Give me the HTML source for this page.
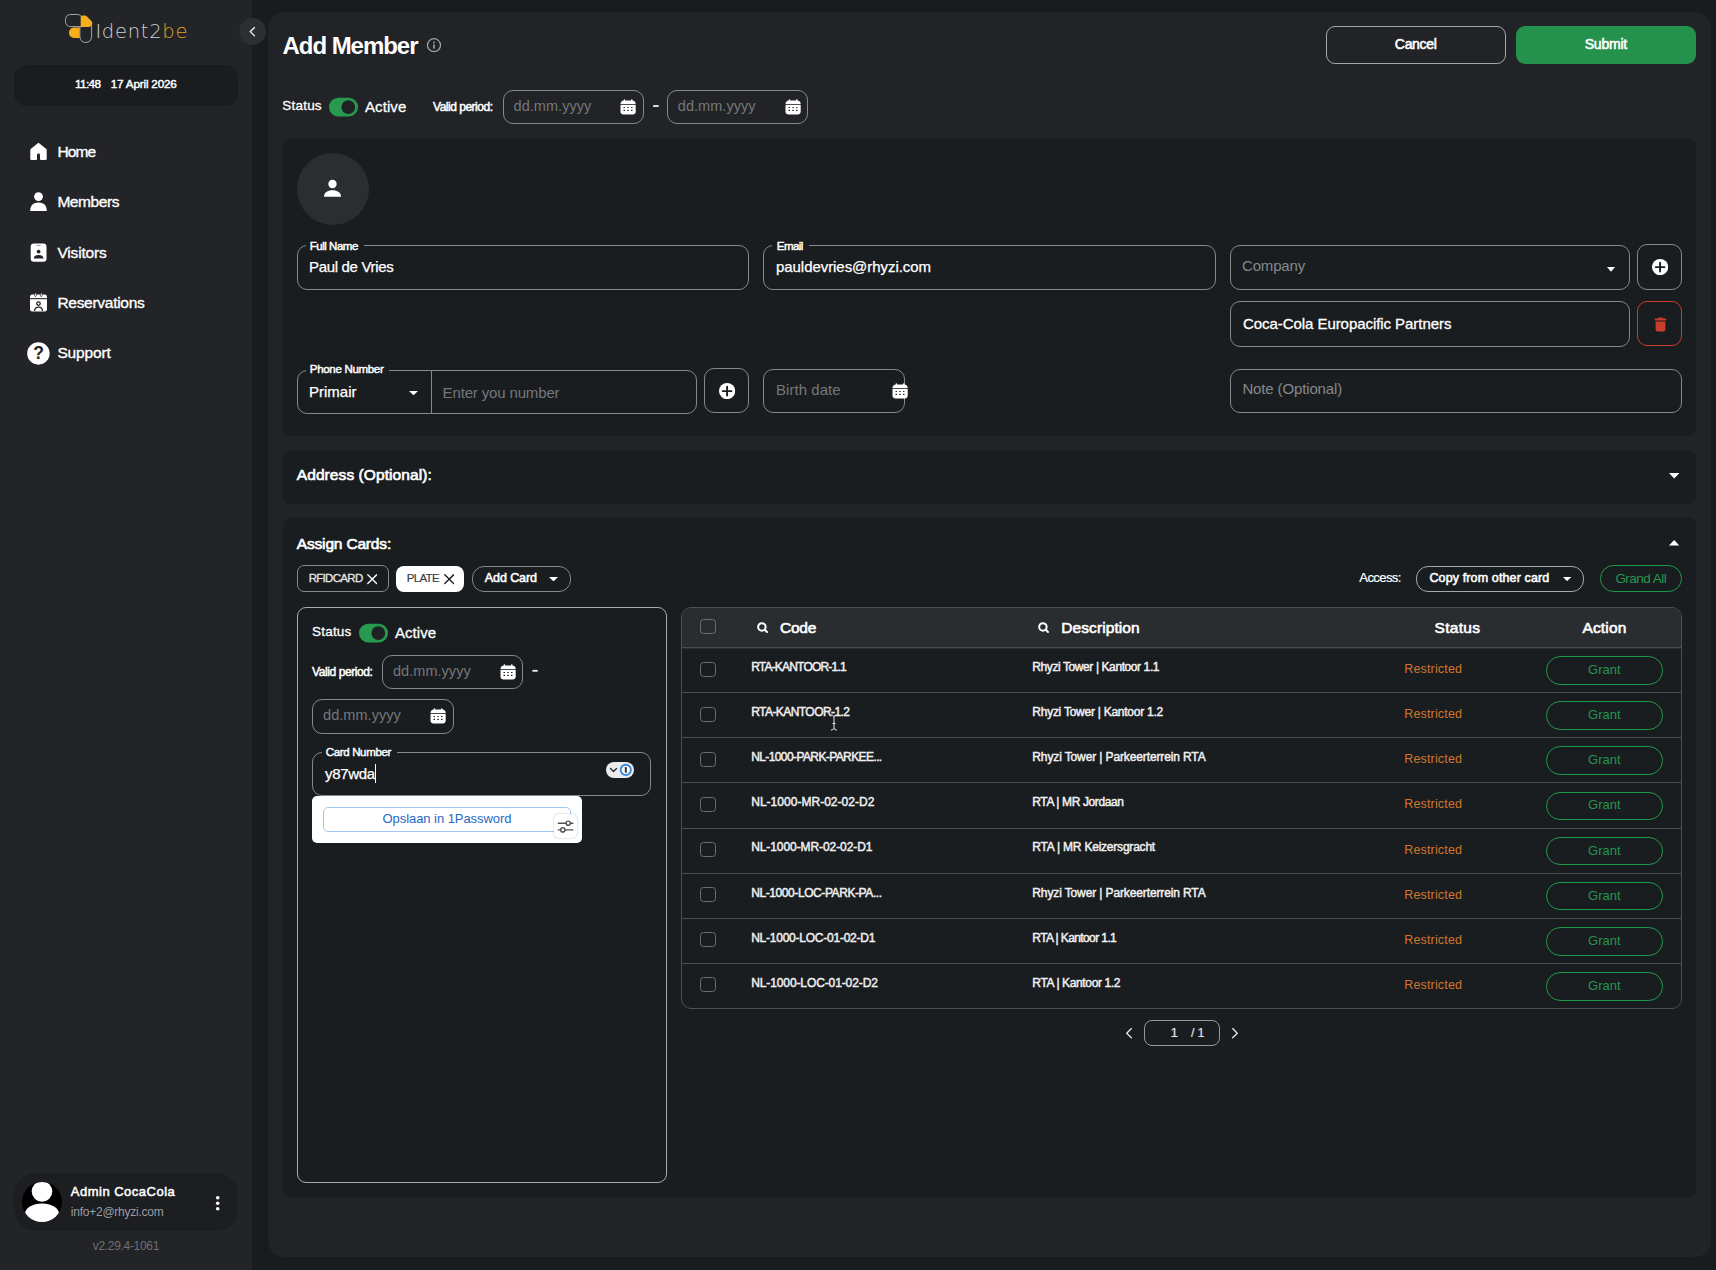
<!DOCTYPE html>
<html lang="en">
<head>
<meta charset="utf-8">
<title>Add Member</title>
<style>
*{box-sizing:border-box;margin:0;padding:0}
html,body{width:1716px;height:1270px;overflow:hidden;background:#191c1f;}
body{position:relative;font-family:"Liberation Sans",sans-serif;color:#fff;font-size:14px;}
.abs{position:absolute}
.t{position:absolute;white-space:nowrap;line-height:1;}
.f{position:absolute;border:1px solid #85888c;border-radius:10px;}
.cb{position:absolute;width:16px;height:15px;border:1px solid #696d78;border-radius:3.5px;}
.hl{position:absolute;height:1px;background:#4a4d51;}
</style>
</head>
<body>
<!-- SIDEBAR -->
<div class="abs" style="left:0.00px;top:0.00px;width:252.00px;height:1270.00px;background:#232428;"></div>
<svg class="abs" style="left:63.00px;top:12.00px;" width="32" height="34" viewBox="0 0 32 34">
      <path d="M19.2 14.6 L7.4 14.6 C4.6 14.6 2.5 12.5 2.5 9.6 L2.5 7.4 C2.5 4.6 4.6 2.5 7.4 2.5 L14.4 2.5 C17.2 2.5 19.2 4.6 19.2 7.4 Z" fill="none" stroke="#a4a6a9" stroke-width="1"/>
      <path d="M16.9 14.6 L16.9 24.8 C16.9 28.2 19.4 30.5 22.7 30.5 C26 30.5 28.6 28.2 28.6 24.8 L28.6 11" fill="none" stroke="#a4a6a9" stroke-width="1"/>
      <path d="M17.7 5.2 C17.7 4.1 18.5 3.4 19.6 3.4 L21.9 3.4 C22.6 3.4 23.2 3.7 23.7 4.2 L28.4 9 C29 9.6 29.2 10.3 29.2 11 L29.2 11.4 C29.2 13.4 27.6 15 25.6 15 L17.7 15 Z" fill="#f6ae1d"/>
      <path d="M16.6 15.4 L16.6 25.9 L11.2 25.9 C8.2 25.9 6 23.7 6 20.7 C6 17.6 8.2 15.4 11.2 15.4 Z" fill="#f6ae1d"/>
    </svg>
<div class="t" style="top:22.29px;font-size:19.5px;color:#cfd0d2;left:95.40px;font-family:'DejaVu Sans',sans-serif;font-weight:200;letter-spacing:0.725px;"><span>Ident2<span style="color:#e0a024">be</span></span></div>
<svg class="abs" style="left:238.00px;top:16.00px;z-index:5" width="30" height="30" viewBox="0 0 30 30"><circle cx="14.6" cy="15.4" r="13.4" fill="#2c2f32"/></svg>
<svg class="abs" style="left:238.00px;top:16.00px;z-index:6" width="30" height="30" viewBox="0 0 30 30"><path d="M16.4 11.6 L12.2 15.6 L16.4 19.7" fill="none" stroke="#dcddde" stroke-width="1.45" stroke-linecap="round" stroke-linejoin="round"/></svg>
<div class="abs" style="left:14.00px;top:65.00px;width:224.00px;height:41.00px;border-radius:13px;background:#1a1c1f;"></div>
<div class="t" style="top:77.80px;font-size:11.7px;-webkit-text-stroke:0.45px #fff;left:75.00px;letter-spacing:-0.598px;"><span>11:48</span></div>
<div class="t" style="top:77.80px;font-size:11.7px;-webkit-text-stroke:0.45px #fff;left:110.80px;letter-spacing:-0.186px;"><span>17 April 2026</span></div>
<div class="t" style="top:144.28px;font-size:15.5px;-webkit-text-stroke:0.35px #fff;left:57.40px;letter-spacing:-0.853px;"><span>Home</span></div>
<div class="t" style="top:193.88px;font-size:15.5px;-webkit-text-stroke:0.35px #fff;left:57.40px;letter-spacing:-0.435px;"><span>Members</span></div>
<div class="t" style="top:245.08px;font-size:15.5px;-webkit-text-stroke:0.35px #fff;left:57.40px;letter-spacing:-0.164px;"><span>Visitors</span></div>
<div class="t" style="top:294.88px;font-size:15.5px;-webkit-text-stroke:0.35px #fff;left:57.40px;letter-spacing:-0.279px;"><span>Reservations</span></div>
<div class="t" style="top:344.68px;font-size:15.5px;-webkit-text-stroke:0.35px #fff;left:57.40px;letter-spacing:-0.133px;"><span>Support</span></div>
<svg class="abs" style="left:29.00px;top:142.00px;" width="19" height="19" viewBox="0 0 19 19"><path d="M9.5 2.1 L16.6 7.9 L16.6 16.9 L12.1 16.9 L12.1 12.9 C12.1 11.4 11 10.4 9.5 10.4 C8 10.4 6.9 11.4 6.9 12.9 L6.9 16.9 L2.4 16.9 L2.4 7.9 Z" fill="#fff" stroke="#fff" stroke-width="2.2" stroke-linejoin="round"/></svg>
<svg class="abs" style="left:29.00px;top:191.00px;" width="19" height="21" viewBox="0 0 19 21"><circle cx="9.5" cy="5.6" r="4.4" fill="#fff"/><path d="M1.2 20 C1.2 14.4 4.4 11.6 9.5 11.6 C14.6 11.6 17.8 14.4 17.8 20 Z" fill="#fff"/></svg>
<svg class="abs" style="left:29.00px;top:242.00px;" width="19" height="21" viewBox="0 0 19 21"><rect x="1.7" y="1.5" width="15.8" height="18.2" rx="3.2" fill="#fff"/><rect x="7.4" y="3" width="4.4" height="0.9" rx="0.45" fill="#9a9c9f"/><circle cx="9.6" cy="9.6" r="1.9" fill="#232428"/><path d="M4.7 16.6 C4.7 14.2 6.9 13.1 9.6 13.1 C12.3 13.1 14.5 14.2 14.5 16.6 Z" fill="#232428"/></svg>
<svg class="abs" style="left:29.00px;top:292.00px;" width="19" height="21" viewBox="0 0 19 21"><rect x="1" y="2.6" width="17" height="17" rx="2.4" fill="#fff"/><rect x="1" y="6.1" width="17" height="1.1" fill="#232428"/><rect x="5.6" y="0.9" width="1.7" height="3.6" rx="0.85" fill="#fff" stroke="#232428" stroke-width="0.7"/><rect x="11.4" y="0.9" width="1.7" height="3.6" rx="0.85" fill="#fff" stroke="#232428" stroke-width="0.7"/><circle cx="9.5" cy="11.6" r="1.75" fill="none" stroke="#232428" stroke-width="1.3"/><path d="M5.6 19 C5.6 16.2 7.4 15.2 9.5 15.2 C11.6 15.2 13.4 16.2 13.4 19" fill="none" stroke="#232428" stroke-width="1.3"/></svg>
<svg class="abs" style="left:26.00px;top:341.00px;" width="25" height="25" viewBox="0 0 25 25"><circle cx="12.4" cy="12.45" r="11.2" fill="#fff"/></svg>
<div class="t" style="top:344.79px;font-size:17.5px;font-weight:bold;color:#232428;left:-261.40px;width:600px;text-align:center;"><span>?</span></div>
<div class="abs" style="left:14.00px;top:1173.00px;width:224.00px;height:58.00px;border-radius:22px;background:#1c1e21;"></div>
<svg class="abs" style="left:22.00px;top:1182.00px;" width="40" height="40" viewBox="0 0 40 40"><defs><clipPath id="avc"><circle cx="20" cy="20" r="20"/></clipPath></defs><circle cx="20" cy="20" r="20" fill="#000"/><g clip-path="url(#avc)"><circle cx="20" cy="9.5" r="10.3" fill="#fff"/><ellipse cx="20" cy="32" rx="17" ry="10.5" fill="#fff"/></g></svg>
<div class="t" style="top:1185.00px;font-size:13px;-webkit-text-stroke:0.5px #fff;left:70.80px;letter-spacing:0.496px;"><span>Admin CocaCola</span></div>
<div class="t" style="top:1205.84px;font-size:12px;color:#9a9da1;left:70.80px;letter-spacing:-0.237px;"><span>info+2@rhyzi.com</span></div>
<svg class="abs" style="left:214.00px;top:1194.00px;" width="8" height="18" viewBox="0 0 8 18"><circle cx="3.7" cy="3.7" r="1.8" fill="#fff"/><circle cx="3.7" cy="9.3" r="1.8" fill="#fff"/><circle cx="3.7" cy="14.8" r="1.8" fill="#fff"/></svg>
<div class="t" style="top:1239.64px;font-size:12px;color:#6d7074;left:92.70px;letter-spacing:-0.306px;"><span>v2.29.4-1061</span></div>
<!-- MAIN PANEL -->
<div class="abs" style="left:268.00px;top:12.00px;width:1443.00px;height:1245.00px;background:#222327;border-radius:16px;"></div>
<div class="t" style="top:33.58px;font-size:24px;font-weight:bold;left:282.50px;letter-spacing:-1.040px;"><span>Add Member</span></div>
<svg class="abs" style="left:426.00px;top:37.00px;" width="16" height="16" viewBox="0 0 16 16"><circle cx="8" cy="8.2" r="6.5" fill="none" stroke="#9c9fa3" stroke-width="1.3"/><rect x="7.2" y="7.4" width="1.6" height="4.2" fill="#a6a9ac"/><rect x="7.2" y="4.7" width="1.6" height="1.5" fill="#a6a9ac"/></svg>
<div class="abs" style="left:1326.00px;top:26.00px;width:180.00px;height:38.00px;border:1px solid #a5a8ab;border-radius:9px;"></div>
<div class="t" style="top:37.45px;font-size:14px;-webkit-text-stroke:0.55px #fff;left:1115.70px;width:600px;text-align:center;letter-spacing:-0.319px;"><span>Cancel</span></div>
<div class="abs" style="left:1516.00px;top:26.00px;width:180.00px;height:38.00px;background:#24914d;border-radius:9px;"></div>
<div class="t" style="top:37.45px;font-size:14px;-webkit-text-stroke:0.55px #fff;left:1305.90px;width:600px;text-align:center;letter-spacing:-0.216px;"><span>Submit</span></div>
<div class="t" style="top:98.57px;font-size:13.5px;-webkit-text-stroke:0.3px #fff;left:282.30px;letter-spacing:0.204px;"><span>Status</span></div>
<svg class="abs" style="left:328.20px;top:96.80px;" width="31" height="21" viewBox="0 0 31 21"><rect x="1" y="0.8" width="29" height="18.6" rx="9.3" fill="#289a50"/><circle cx="20.3" cy="10.1" r="6.9" fill="#1f2225"/></svg>
<div class="t" style="top:99.30px;font-size:15px;-webkit-text-stroke:0.3px #fff;left:365.00px;letter-spacing:0.088px;"><span>Active</span></div>
<div class="t" style="top:100.84px;font-size:12px;-webkit-text-stroke:0.5px #fff;left:433.00px;letter-spacing:-0.486px;"><span>Valid period:</span></div>
<div class="f" style="left:503.00px;top:90.00px;width:141.00px;height:34.00px;border-color:#85888c;border-radius:10px;"></div>
<div class="t" style="top:99.13px;font-size:14.5px;color:#74777b;left:513.60px;letter-spacing:0.040px;"><span>dd.mm.yyyy</span></div>
<svg class="abs" style="left:620.00px;top:99.10px;" width="16" height="16" viewBox="0 0 16 16"><path d="M0.5 5 C0.5 2.9 1.9 1.6 4 1.6 L12.2 1.6 C14.3 1.6 15.7 2.9 15.7 5 L15.7 12.6 C15.7 14.4 14.5 15.6 12.7 15.6 L3.5 15.6 C1.7 15.6 0.5 14.4 0.5 12.6 Z" fill="#fff"/>
    <rect x="3.7" y="0.2" width="1.4" height="2.4" rx="0.6" fill="#fff"/><rect x="11.1" y="0.2" width="1.4" height="2.4" rx="0.6" fill="#fff"/>
    <rect x="0" y="5.1" width="16" height="0.8" fill="#222327"/>
    <g fill="#222327"><rect x="3.5" y="7.9" width="1.5" height="1.2" rx="0.3"/><rect x="7.3" y="7.9" width="1.5" height="1.2" rx="0.3"/><rect x="11" y="7.9" width="1.5" height="1.2" rx="0.3"/>
    <rect x="3.5" y="10.8" width="1.5" height="1.2" rx="0.3"/><rect x="7.3" y="10.8" width="1.5" height="1.2" rx="0.3"/><rect x="11" y="10.8" width="1.5" height="1.2" rx="0.3"/></g></svg>
<svg class="abs" style="left:652.00px;top:104.00px;" width="8" height="4" viewBox="0 0 8 4"><rect x="1.1" y="1.15" width="5.6" height="1.8" fill="#eee"/></svg>
<div class="f" style="left:666.70px;top:90.00px;width:141.80px;height:34.00px;border-color:#85888c;border-radius:10px;"></div>
<div class="t" style="top:99.13px;font-size:14.5px;color:#74777b;left:677.80px;letter-spacing:0.040px;"><span>dd.mm.yyyy</span></div>
<svg class="abs" style="left:785.00px;top:99.10px;" width="16" height="16" viewBox="0 0 16 16"><path d="M0.5 5 C0.5 2.9 1.9 1.6 4 1.6 L12.2 1.6 C14.3 1.6 15.7 2.9 15.7 5 L15.7 12.6 C15.7 14.4 14.5 15.6 12.7 15.6 L3.5 15.6 C1.7 15.6 0.5 14.4 0.5 12.6 Z" fill="#fff"/>
    <rect x="3.7" y="0.2" width="1.4" height="2.4" rx="0.6" fill="#fff"/><rect x="11.1" y="0.2" width="1.4" height="2.4" rx="0.6" fill="#fff"/>
    <rect x="0" y="5.1" width="16" height="0.8" fill="#222327"/>
    <g fill="#222327"><rect x="3.5" y="7.9" width="1.5" height="1.2" rx="0.3"/><rect x="7.3" y="7.9" width="1.5" height="1.2" rx="0.3"/><rect x="11" y="7.9" width="1.5" height="1.2" rx="0.3"/>
    <rect x="3.5" y="10.8" width="1.5" height="1.2" rx="0.3"/><rect x="7.3" y="10.8" width="1.5" height="1.2" rx="0.3"/><rect x="11" y="10.8" width="1.5" height="1.2" rx="0.3"/></g></svg>
<!-- CARD 1 -->
<div class="abs" style="left:283.00px;top:138.50px;width:1413.00px;height:297.00px;background:#1a1d20;border-radius:8px;"></div>
<div class="abs" style="left:297.00px;top:152.50px;width:72.00px;height:72.00px;border-radius:36px;background:#2b2e31;"></div>
<svg class="abs" style="left:323.00px;top:178.90px;" width="19" height="19" viewBox="0 0 19 19"><circle cx="9.5" cy="5" r="4.2" fill="#fff"/><path d="M1 17.8 C1 13.4 4.6 11.2 9.5 11.2 C14.4 11.2 18 13.4 18 17.8 Z" fill="#fff"/></svg>
<div class="f" style="left:297.00px;top:245.00px;width:452.00px;height:45.00px;border-color:#85888c;border-radius:10px;"></div>
<div class="abs" style="left:305.50px;top:244.00px;width:58.00px;height:3.00px;background:#1a1d20;"></div>
<div class="t" style="top:240.87px;font-size:11.5px;-webkit-text-stroke:0.45px #fff;left:309.80px;letter-spacing:-0.488px;"><span>Full Name</span></div>
<div class="t" style="top:259.40px;font-size:15px;-webkit-text-stroke:0.25px #fff;left:309.00px;letter-spacing:-0.323px;"><span>Paul de Vries</span></div>
<div class="f" style="left:763.00px;top:245.00px;width:452.50px;height:45.00px;border-color:#85888c;border-radius:10px;"></div>
<div class="abs" style="left:771.50px;top:244.00px;width:37.00px;height:3.00px;background:#1a1d20;"></div>
<div class="t" style="top:240.87px;font-size:11.5px;-webkit-text-stroke:0.45px #fff;left:776.80px;letter-spacing:-0.566px;"><span>Email</span></div>
<div class="t" style="top:259.40px;font-size:15px;-webkit-text-stroke:0.25px #fff;left:776.00px;letter-spacing:-0.056px;"><span>pauldevries@rhyzi.com</span></div>
<div class="f" style="left:1230.00px;top:245.00px;width:400.00px;height:45.00px;border-color:#85888c;border-radius:10px;"></div>
<div class="t" style="top:257.90px;font-size:15px;color:#85888c;left:1242.00px;letter-spacing:-0.167px;"><span>Company</span></div>
<svg class="abs" style="left:1606.50px;top:267.00px;" width="8" height="4.8" viewBox="0 0 8 4.8"><path d="M0 0 L8 0 L4.0 4.8 Z" fill="#fff"/></svg>
<div class="abs" style="left:1637.00px;top:244.30px;width:45.00px;height:45.30px;border:1px solid #85888c;border-radius:10px;"></div>
<svg class="abs" style="left:1652.10px;top:259.00px;" width="16.2" height="16.2" viewBox="0 0 16.2 16.2"><circle cx="8.1" cy="8.1" r="8.1" fill="#fff"/><path d="M8.1 3.6999999999999993 L8.1 12.5 M3.6999999999999993 8.1 L12.5 8.1" stroke="#1a1d20" stroke-width="1.9" stroke-linecap="round"/></svg>
<div class="f" style="left:1230.00px;top:301.30px;width:400.00px;height:45.40px;border-color:#85888c;border-radius:10px;"></div>
<div class="t" style="top:315.60px;font-size:15px;-webkit-text-stroke:0.3px #fff;left:1243.00px;letter-spacing:-0.058px;"><span>Coca-Cola Europacific Partners</span></div>
<div class="abs" style="left:1637.00px;top:301.30px;width:45.00px;height:44.60px;border:1px solid #c83d2c;border-radius:10px;"></div>
<svg class="abs" style="left:1653.50px;top:316.80px;" width="13" height="15" viewBox="0 0 13 15"><path d="M4.6 0.6 L8.4 0.6 L9 1.5 L12.2 1.5 L12.2 3.4 L0.8 3.4 L0.8 1.5 L4 1.5 Z" fill="#c83d2c"/><path d="M1.6 4.4 L11.4 4.4 L11.4 12.6 C11.4 13.6 10.6 14.4 9.6 14.4 L3.4 14.4 C2.4 14.4 1.6 13.6 1.6 12.6 Z" fill="#c83d2c"/></svg>
<div class="f" style="left:297.00px;top:369.80px;width:399.70px;height:43.80px;border-color:#85888c;border-radius:10px;"></div>
<div class="abs" style="left:305.50px;top:368.80px;width:83.50px;height:3.00px;background:#1a1d20;"></div>
<div class="t" style="top:363.97px;font-size:11.5px;-webkit-text-stroke:0.45px #fff;left:309.80px;letter-spacing:-0.305px;"><span>Phone Number</span></div>
<div class="abs" style="left:430.90px;top:370.00px;width:1.00px;height:43.40px;background:#85888c;"></div>
<div class="t" style="top:384.00px;font-size:15px;-webkit-text-stroke:0.25px #fff;left:309.00px;letter-spacing:0.000px;"><span>Primair</span></div>
<svg class="abs" style="left:409.30px;top:391.00px;" width="9" height="4.3" viewBox="0 0 9 4.3"><path d="M0 0 L9 0 L4.5 4.3 Z" fill="#fff"/></svg>
<div class="t" style="top:385.10px;font-size:15px;color:#74777b;left:442.60px;letter-spacing:-0.149px;"><span>Enter you number</span></div>
<div class="abs" style="left:704.00px;top:368.00px;width:45.00px;height:45.00px;border:1px solid #85888c;border-radius:10px;"></div>
<svg class="abs" style="left:718.90px;top:382.90px;" width="16.2" height="16.2" viewBox="0 0 16.2 16.2"><circle cx="8.1" cy="8.1" r="8.1" fill="#fff"/><path d="M8.1 3.6999999999999993 L8.1 12.5 M3.6999999999999993 8.1 L12.5 8.1" stroke="#1a1d20" stroke-width="1.9" stroke-linecap="round"/></svg>
<div class="f" style="left:763.00px;top:369.00px;width:142.00px;height:44.00px;border-color:#85888c;border-radius:10px;"></div>
<div class="t" style="top:381.80px;font-size:15px;color:#74777b;left:776.00px;letter-spacing:0.042px;"><span>Birth date</span></div>
<svg class="abs" style="left:892.00px;top:383.00px;" width="16" height="16" viewBox="0 0 16 16"><path d="M0.5 5 C0.5 2.9 1.9 1.6 4 1.6 L12.2 1.6 C14.3 1.6 15.7 2.9 15.7 5 L15.7 12.6 C15.7 14.4 14.5 15.6 12.7 15.6 L3.5 15.6 C1.7 15.6 0.5 14.4 0.5 12.6 Z" fill="#fff"/>
    <rect x="3.7" y="0.2" width="1.4" height="2.4" rx="0.6" fill="#fff"/><rect x="11.1" y="0.2" width="1.4" height="2.4" rx="0.6" fill="#fff"/>
    <rect x="0" y="5.1" width="16" height="0.8" fill="#1a1d20"/>
    <g fill="#1a1d20"><rect x="3.5" y="7.9" width="1.5" height="1.2" rx="0.3"/><rect x="7.3" y="7.9" width="1.5" height="1.2" rx="0.3"/><rect x="11" y="7.9" width="1.5" height="1.2" rx="0.3"/>
    <rect x="3.5" y="10.8" width="1.5" height="1.2" rx="0.3"/><rect x="7.3" y="10.8" width="1.5" height="1.2" rx="0.3"/><rect x="11" y="10.8" width="1.5" height="1.2" rx="0.3"/></g></svg>
<div class="f" style="left:1230.00px;top:369.00px;width:452.00px;height:43.70px;border-color:#85888c;border-radius:10px;"></div>
<div class="t" style="top:381.20px;font-size:15px;color:#85888c;left:1242.40px;letter-spacing:-0.137px;"><span>Note (Optional)</span></div>
<!-- ADDRESS -->
<div class="abs" style="left:283.00px;top:450.00px;width:1413.00px;height:53.50px;background:#1a1d20;border-radius:8px;"></div>
<div class="t" style="top:467.18px;font-size:15.5px;-webkit-text-stroke:0.65px #fff;left:296.80px;letter-spacing:0.082px;"><span>Address (Optional):</span></div>
<svg class="abs" style="left:1668.60px;top:473.00px;" width="10.4" height="5.6" viewBox="0 0 10.4 5.6"><path d="M0 0 L10.4 0 L5.2 5.6 Z" fill="#fff"/></svg>
<!-- ASSIGN CARDS -->
<div class="abs" style="left:283.00px;top:517.60px;width:1413.00px;height:679.40px;background:#1a1d20;border-radius:8px;"></div>
<div class="t" style="top:536.18px;font-size:15.5px;-webkit-text-stroke:0.65px #fff;left:296.80px;letter-spacing:-0.174px;"><span>Assign Cards:</span></div>
<svg class="abs" style="left:1668.60px;top:540.40px;" width="10.4" height="5.6" viewBox="0 0 10.4 5.6"><path d="M0 5.6 L10.4 5.6 L5.2 0 Z" fill="#fff"/></svg>
<div class="abs" style="left:297.00px;top:565.00px;width:92.00px;height:27.00px;border:1px solid #85888c;border-radius:7px;"></div>
<div class="t" style="top:573.07px;font-size:11.5px;color:#e4e5e6;-webkit-text-stroke:0.3px #e4e5e6;left:308.70px;letter-spacing:-0.703px;"><span>RFIDCARD</span></div>
<svg class="abs" style="left:367.00px;top:574.30px;" width="10.4" height="10.4" viewBox="0 0 10.4 10.4"><path d="M0.8 0.8 L9.6 9.6 M9.6 0.8 L0.8 9.6" stroke="#fff" stroke-width="1.4" stroke-linecap="round"/></svg>
<div class="abs" style="left:396.00px;top:565.50px;width:68.00px;height:26.50px;background:#fff;border-radius:8px;"></div>
<div class="t" style="top:573.07px;font-size:11.5px;color:#3a3d40;-webkit-text-stroke:0.2px #3a3d40;left:406.80px;letter-spacing:-0.695px;"><span>PLATE</span></div>
<svg class="abs" style="left:444.00px;top:574.30px;" width="10.4" height="10.4" viewBox="0 0 10.4 10.4"><path d="M0.8 0.8 L9.6 9.6 M9.6 0.8 L0.8 9.6" stroke="#1a1d20" stroke-width="1.4" stroke-linecap="round"/></svg>
<div class="abs" style="left:472.00px;top:566.00px;width:99.00px;height:26.00px;border:1px solid #85888c;border-radius:12px;"></div>
<div class="t" style="top:571.72px;font-size:12.5px;-webkit-text-stroke:0.55px #fff;left:484.80px;letter-spacing:-0.087px;"><span>Add Card</span></div>
<svg class="abs" style="left:549.30px;top:576.80px;" width="9" height="4.4" viewBox="0 0 9 4.4"><path d="M0 0 L9 0 L4.5 4.4 Z" fill="#fff"/></svg>
<div class="t" style="top:571.30px;font-size:13px;-webkit-text-stroke:0.2px #fff;left:1359.30px;letter-spacing:-0.569px;"><span>Access:</span></div>
<div class="abs" style="left:1416.00px;top:566.00px;width:167.60px;height:26.00px;border:1px solid #a5a8ab;border-radius:12px;"></div>
<div class="t" style="top:571.72px;font-size:12.5px;-webkit-text-stroke:0.55px #fff;left:1429.40px;letter-spacing:0.130px;"><span>Copy from other card</span></div>
<svg class="abs" style="left:1562.80px;top:577.30px;" width="8.2" height="4.2" viewBox="0 0 8.2 4.2"><path d="M0 0 L8.2 0 L4.1 4.2 Z" fill="#fff"/></svg>
<div class="abs" style="left:1600.00px;top:565.30px;width:82.00px;height:26.50px;border:1px solid #1f9a4b;border-radius:13.5px;"></div>
<div class="t" style="top:571.57px;font-size:13.5px;color:#24954f;left:1615.40px;letter-spacing:-0.529px;"><span>Grand All</span></div>
<div class="abs" style="left:297.00px;top:607.00px;width:370.00px;height:575.50px;border:1px solid #a9acaf;border-radius:9px;"></div>
<div class="t" style="top:624.67px;font-size:13.5px;-webkit-text-stroke:0.3px #fff;left:312.10px;letter-spacing:0.184px;"><span>Status</span></div>
<svg class="abs" style="left:358.20px;top:622.60px;" width="31" height="21" viewBox="0 0 31 21"><rect x="1" y="0.8" width="29" height="18.6" rx="9.3" fill="#289a50"/><circle cx="20.3" cy="10.1" r="6.9" fill="#1f2225"/></svg>
<div class="t" style="top:625.10px;font-size:15px;-webkit-text-stroke:0.3px #fff;left:394.90px;letter-spacing:0.088px;"><span>Active</span></div>
<div class="t" style="top:666.44px;font-size:12px;-webkit-text-stroke:0.5px #fff;left:312.10px;letter-spacing:-0.427px;"><span>Valid period:</span></div>
<div class="f" style="left:382.00px;top:655.20px;width:140.70px;height:33.70px;border-color:#85888c;border-radius:10px;"></div>
<div class="t" style="top:663.53px;font-size:14.5px;color:#74777b;left:393.00px;letter-spacing:0.040px;"><span>dd.mm.yyyy</span></div>
<svg class="abs" style="left:500.00px;top:664.00px;" width="16" height="16" viewBox="0 0 16 16"><path d="M0.5 5 C0.5 2.9 1.9 1.6 4 1.6 L12.2 1.6 C14.3 1.6 15.7 2.9 15.7 5 L15.7 12.6 C15.7 14.4 14.5 15.6 12.7 15.6 L3.5 15.6 C1.7 15.6 0.5 14.4 0.5 12.6 Z" fill="#fff"/>
    <rect x="3.7" y="0.2" width="1.4" height="2.4" rx="0.6" fill="#fff"/><rect x="11.1" y="0.2" width="1.4" height="2.4" rx="0.6" fill="#fff"/>
    <rect x="0" y="5.1" width="16" height="0.8" fill="#1a1d20"/>
    <g fill="#1a1d20"><rect x="3.5" y="7.9" width="1.5" height="1.2" rx="0.3"/><rect x="7.3" y="7.9" width="1.5" height="1.2" rx="0.3"/><rect x="11" y="7.9" width="1.5" height="1.2" rx="0.3"/>
    <rect x="3.5" y="10.8" width="1.5" height="1.2" rx="0.3"/><rect x="7.3" y="10.8" width="1.5" height="1.2" rx="0.3"/><rect x="11" y="10.8" width="1.5" height="1.2" rx="0.3"/></g></svg>
<svg class="abs" style="left:531.00px;top:668.00px;" width="8" height="5" viewBox="0 0 8 5"><rect x="1.4" y="1.9" width="5.3" height="1.8" fill="#eee"/></svg>
<div class="f" style="left:312.00px;top:699.00px;width:142.00px;height:35.00px;border-color:#85888c;border-radius:10px;"></div>
<div class="t" style="top:707.73px;font-size:14.5px;color:#74777b;left:323.10px;letter-spacing:0.040px;"><span>dd.mm.yyyy</span></div>
<svg class="abs" style="left:430.00px;top:708.00px;" width="16" height="16" viewBox="0 0 16 16"><path d="M0.5 5 C0.5 2.9 1.9 1.6 4 1.6 L12.2 1.6 C14.3 1.6 15.7 2.9 15.7 5 L15.7 12.6 C15.7 14.4 14.5 15.6 12.7 15.6 L3.5 15.6 C1.7 15.6 0.5 14.4 0.5 12.6 Z" fill="#fff"/>
    <rect x="3.7" y="0.2" width="1.4" height="2.4" rx="0.6" fill="#fff"/><rect x="11.1" y="0.2" width="1.4" height="2.4" rx="0.6" fill="#fff"/>
    <rect x="0" y="5.1" width="16" height="0.8" fill="#1a1d20"/>
    <g fill="#1a1d20"><rect x="3.5" y="7.9" width="1.5" height="1.2" rx="0.3"/><rect x="7.3" y="7.9" width="1.5" height="1.2" rx="0.3"/><rect x="11" y="7.9" width="1.5" height="1.2" rx="0.3"/>
    <rect x="3.5" y="10.8" width="1.5" height="1.2" rx="0.3"/><rect x="7.3" y="10.8" width="1.5" height="1.2" rx="0.3"/><rect x="11" y="10.8" width="1.5" height="1.2" rx="0.3"/></g></svg>
<div class="f" style="left:312.00px;top:752.00px;width:339.00px;height:44.00px;border-color:#85888c;border-radius:10px;"></div>
<div class="abs" style="left:321.50px;top:751.00px;width:75.00px;height:3.00px;background:#1a1d20;"></div>
<div class="t" style="top:747.47px;font-size:11.5px;-webkit-text-stroke:0.45px #fff;left:325.70px;letter-spacing:-0.333px;"><span>Card Number</span></div>
<div class="t" style="top:765.60px;font-size:15px;-webkit-text-stroke:0.25px #fff;left:325.00px;letter-spacing:-0.341px;"><span>y87wda</span></div>
<div class="abs" style="left:375.30px;top:764.30px;width:1.00px;height:18.30px;background:#fff;"></div>
<div class="abs" style="left:606.00px;top:762.00px;width:28.00px;height:16.00px;border-radius:8px;background:#ececed;"></div>
<svg class="abs" style="left:609.00px;top:766.00px;" width="9" height="8" viewBox="0 0 9 8"><path d="M1.5 2.5 L4.5 5.5 L7.5 2.5" fill="none" stroke="#26282b" stroke-width="1.4" stroke-linecap="round" stroke-linejoin="round"/></svg>
<svg class="abs" style="left:619.00px;top:763.00px;" width="14" height="14" viewBox="0 0 14 14"><circle cx="6.8" cy="6.9" r="5.1" fill="#fff" stroke="#3a8ae0" stroke-width="1.9"/><rect x="5.85" y="4" width="1.9" height="5.8" rx="0.6" fill="#2b2d31"/></svg>
<div class="abs" style="left:312.00px;top:795.80px;width:270.00px;height:46.80px;background:#fff;border-radius:5px;"></div>
<div class="abs" style="left:323.30px;top:806.80px;width:247.70px;height:24.80px;border:1px solid #a3c6f2;border-radius:5px;background:#fff;"></div>
<div class="t" style="top:811.60px;font-size:13px;color:#2768c4;left:382.50px;letter-spacing:-0.057px;"><span>Opslaan in 1Password</span></div>
<div class="abs" style="left:553.80px;top:814.40px;width:23.60px;height:23.80px;background:#fff;border-radius:5px;box-shadow:0 0 2px rgba(0,0,0,0.3);"></div>
<svg class="abs" style="left:557.00px;top:818.00px;" width="18" height="18" viewBox="0 0 18 18"><g fill="none" stroke="#505356" stroke-width="1.4" stroke-linecap="round"><path d="M1.3 5.2 L9 5.2 M13.4 5.2 L15.9 5.2 M1.3 11.9 L3.6 11.9 M8 11.9 L15.9 11.9"/><circle cx="11.2" cy="5.2" r="2.1"/><circle cx="5.8" cy="11.9" r="2.1"/></g></svg>
<!-- TABLE -->
<div class="abs" style="left:681.00px;top:607.00px;width:1001.00px;height:401.50px;border:1px solid #4c4f53;border-radius:10px;overflow:hidden;"><div style="position:absolute;left:0;top:0;width:1001px;height:40.5px;background:#2a2d30;"></div></div>
<div class="cb" style="left:700px;top:619px;"></div>
<svg class="abs" style="left:756.50px;top:622.00px;" width="12" height="12" viewBox="0 0 12 12"><circle cx="4.9" cy="4.9" r="3.75" fill="none" stroke="#fff" stroke-width="2"/><path d="M7.8 7.8 L10 10" stroke="#fff" stroke-width="2" stroke-linecap="round"/></svg>
<div class="t" style="top:619.88px;font-size:15.5px;-webkit-text-stroke:0.6px #fff;left:780.00px;letter-spacing:-0.221px;"><span>Code</span></div>
<svg class="abs" style="left:1037.50px;top:622.00px;" width="12" height="12" viewBox="0 0 12 12"><circle cx="4.9" cy="4.9" r="3.75" fill="none" stroke="#fff" stroke-width="2"/><path d="M7.8 7.8 L10 10" stroke="#fff" stroke-width="2" stroke-linecap="round"/></svg>
<div class="t" style="top:619.88px;font-size:15.5px;-webkit-text-stroke:0.6px #fff;left:1061.30px;letter-spacing:0.087px;"><span>Description</span></div>
<div class="t" style="top:619.88px;font-size:15.5px;-webkit-text-stroke:0.6px #fff;left:1434.50px;letter-spacing:0.309px;"><span>Status</span></div>
<div class="t" style="top:619.88px;font-size:15.5px;-webkit-text-stroke:0.6px #fff;left:1582.40px;letter-spacing:0.181px;"><span>Action</span></div>
<div class="hl" style="left:682px;top:647.0px;width:999px;"></div>
<div class="cb" style="left:700px;top:661.5px;"></div>
<div class="t" style="top:660.94px;font-size:12px;color:#f1f1f2;-webkit-text-stroke:0.45px #f1f1f2;left:751.20px;letter-spacing:-0.806px;"><span>RTA-KANTOOR-1.1</span></div>
<div class="t" style="top:660.94px;font-size:12px;color:#f1f1f2;-webkit-text-stroke:0.45px #f1f1f2;left:1032.30px;letter-spacing:-0.407px;"><span>Rhyzi Tower | Kantoor 1.1</span></div>
<div class="t" style="top:663.02px;font-size:12.5px;color:#cf772d;left:1404.20px;letter-spacing:0.169px;"><span>Restricted</span></div>
<div class="abs" style="left:1546.00px;top:656.20px;width:117.00px;height:28.60px;border:1px solid #1f9a4b;border-radius:14.3px;"></div>
<div class="t" style="top:663.10px;font-size:13px;color:#24954f;left:1588.00px;letter-spacing:0.046px;"><span>Grant</span></div>
<div class="hl" style="left:682px;top:692.1px;width:999px;"></div>
<div class="cb" style="left:700px;top:706.6px;"></div>
<div class="t" style="top:706.07px;font-size:12px;color:#f1f1f2;-webkit-text-stroke:0.45px #f1f1f2;left:751.20px;letter-spacing:-0.563px;"><span>RTA-KANTOOR-1.2</span></div>
<div class="t" style="top:706.07px;font-size:12px;color:#f1f1f2;-webkit-text-stroke:0.45px #f1f1f2;left:1032.30px;letter-spacing:-0.253px;"><span>Rhyzi Tower | Kantoor 1.2</span></div>
<div class="t" style="top:708.15px;font-size:12.5px;color:#cf772d;left:1404.20px;letter-spacing:0.169px;"><span>Restricted</span></div>
<div class="abs" style="left:1546.00px;top:701.33px;width:117.00px;height:28.60px;border:1px solid #1f9a4b;border-radius:14.3px;"></div>
<div class="t" style="top:708.23px;font-size:13px;color:#24954f;left:1588.00px;letter-spacing:0.046px;"><span>Grant</span></div>
<div class="hl" style="left:682px;top:737.3px;width:999px;"></div>
<div class="cb" style="left:700px;top:751.8px;"></div>
<div class="t" style="top:751.20px;font-size:12px;color:#f1f1f2;-webkit-text-stroke:0.45px #f1f1f2;left:751.20px;letter-spacing:-0.600px;"><span>NL-1000-PARK-PARKEE...</span></div>
<div class="t" style="top:751.20px;font-size:12px;color:#f1f1f2;-webkit-text-stroke:0.45px #f1f1f2;left:1032.30px;letter-spacing:-0.122px;"><span>Rhyzi Tower | Parkeerterrein RTA</span></div>
<div class="t" style="top:753.28px;font-size:12.5px;color:#cf772d;left:1404.20px;letter-spacing:0.169px;"><span>Restricted</span></div>
<div class="abs" style="left:1546.00px;top:746.46px;width:117.00px;height:28.60px;border:1px solid #1f9a4b;border-radius:14.3px;"></div>
<div class="t" style="top:753.36px;font-size:13px;color:#24954f;left:1588.00px;letter-spacing:0.046px;"><span>Grant</span></div>
<div class="hl" style="left:682px;top:782.4px;width:999px;"></div>
<div class="cb" style="left:700px;top:796.9px;"></div>
<div class="t" style="top:796.33px;font-size:12px;color:#f1f1f2;-webkit-text-stroke:0.45px #f1f1f2;left:751.20px;letter-spacing:0.027px;"><span>NL-1000-MR-02-02-D2</span></div>
<div class="t" style="top:796.33px;font-size:12px;color:#f1f1f2;-webkit-text-stroke:0.45px #f1f1f2;left:1032.30px;letter-spacing:-0.379px;"><span>RTA | MR Jordaan</span></div>
<div class="t" style="top:798.41px;font-size:12.5px;color:#cf772d;left:1404.20px;letter-spacing:0.169px;"><span>Restricted</span></div>
<div class="abs" style="left:1546.00px;top:791.59px;width:117.00px;height:28.60px;border:1px solid #1f9a4b;border-radius:14.3px;"></div>
<div class="t" style="top:798.49px;font-size:13px;color:#24954f;left:1588.00px;letter-spacing:0.046px;"><span>Grant</span></div>
<div class="hl" style="left:682px;top:827.5px;width:999px;"></div>
<div class="cb" style="left:700px;top:842.0px;"></div>
<div class="t" style="top:841.46px;font-size:12px;color:#f1f1f2;-webkit-text-stroke:0.45px #f1f1f2;left:751.20px;letter-spacing:-0.084px;"><span>NL-1000-MR-02-02-D1</span></div>
<div class="t" style="top:841.46px;font-size:12px;color:#f1f1f2;-webkit-text-stroke:0.45px #f1f1f2;left:1032.30px;letter-spacing:-0.214px;"><span>RTA | MR Keizersgracht</span></div>
<div class="t" style="top:843.54px;font-size:12.5px;color:#cf772d;left:1404.20px;letter-spacing:0.169px;"><span>Restricted</span></div>
<div class="abs" style="left:1546.00px;top:836.72px;width:117.00px;height:28.60px;border:1px solid #1f9a4b;border-radius:14.3px;"></div>
<div class="t" style="top:843.62px;font-size:13px;color:#24954f;left:1588.00px;letter-spacing:0.046px;"><span>Grant</span></div>
<div class="hl" style="left:682px;top:872.6px;width:999px;"></div>
<div class="cb" style="left:700px;top:887.1px;"></div>
<div class="t" style="top:886.59px;font-size:12px;color:#f1f1f2;-webkit-text-stroke:0.45px #f1f1f2;left:751.20px;letter-spacing:-0.415px;"><span>NL-1000-LOC-PARK-PA...</span></div>
<div class="t" style="top:886.59px;font-size:12px;color:#f1f1f2;-webkit-text-stroke:0.45px #f1f1f2;left:1032.30px;letter-spacing:-0.122px;"><span>Rhyzi Tower | Parkeerterrein RTA</span></div>
<div class="t" style="top:888.67px;font-size:12.5px;color:#cf772d;left:1404.20px;letter-spacing:0.169px;"><span>Restricted</span></div>
<div class="abs" style="left:1546.00px;top:881.85px;width:117.00px;height:28.60px;border:1px solid #1f9a4b;border-radius:14.3px;"></div>
<div class="t" style="top:888.75px;font-size:13px;color:#24954f;left:1588.00px;letter-spacing:0.046px;"><span>Grant</span></div>
<div class="hl" style="left:682px;top:917.8px;width:999px;"></div>
<div class="cb" style="left:700px;top:932.3px;"></div>
<div class="t" style="top:931.72px;font-size:12px;color:#f1f1f2;-webkit-text-stroke:0.45px #f1f1f2;left:751.20px;letter-spacing:-0.239px;"><span>NL-1000-LOC-01-02-D1</span></div>
<div class="t" style="top:931.72px;font-size:12px;color:#f1f1f2;-webkit-text-stroke:0.45px #f1f1f2;left:1032.30px;letter-spacing:-0.598px;"><span>RTA | Kantoor 1.1</span></div>
<div class="t" style="top:933.80px;font-size:12.5px;color:#cf772d;left:1404.20px;letter-spacing:0.169px;"><span>Restricted</span></div>
<div class="abs" style="left:1546.00px;top:926.98px;width:117.00px;height:28.60px;border:1px solid #1f9a4b;border-radius:14.3px;"></div>
<div class="t" style="top:933.88px;font-size:13px;color:#24954f;left:1588.00px;letter-spacing:0.046px;"><span>Grant</span></div>
<div class="hl" style="left:682px;top:962.9px;width:999px;"></div>
<div class="cb" style="left:700px;top:977.4px;"></div>
<div class="t" style="top:976.85px;font-size:12px;color:#f1f1f2;-webkit-text-stroke:0.45px #f1f1f2;left:751.20px;letter-spacing:-0.107px;"><span>NL-1000-LOC-01-02-D2</span></div>
<div class="t" style="top:976.85px;font-size:12px;color:#f1f1f2;-webkit-text-stroke:0.45px #f1f1f2;left:1032.30px;letter-spacing:-0.366px;"><span>RTA | Kantoor 1.2</span></div>
<div class="t" style="top:978.93px;font-size:12.5px;color:#cf772d;left:1404.20px;letter-spacing:0.169px;"><span>Restricted</span></div>
<div class="abs" style="left:1546.00px;top:972.11px;width:117.00px;height:28.60px;border:1px solid #1f9a4b;border-radius:14.3px;"></div>
<div class="t" style="top:979.01px;font-size:13px;color:#24954f;left:1588.00px;letter-spacing:0.046px;"><span>Grant</span></div>
<svg class="abs" style="left:1124.00px;top:1026.80px;" width="10" height="12" viewBox="0 0 10 12"><path d="M7.4 1.6 L2.7 6.2 L7.4 10.8" fill="none" stroke="#e4e4e5" stroke-width="1.35" stroke-linecap="round" stroke-linejoin="round"/></svg>
<div class="abs" style="left:1144.00px;top:1020.00px;width:76.00px;height:26.00px;border:1px solid #96999c;border-radius:8px;"></div>
<div class="t" style="top:1025.97px;font-size:13.5px;color:#e6e6e7;-webkit-text-stroke:0.15px #e6e6e7;left:1170.60px;"><span>1</span></div>
<div class="t" style="top:1026.82px;font-size:12.5px;color:#e6e6e7;-webkit-text-stroke:0.15px #e6e6e7;left:1191.00px;letter-spacing:-0.253px;"><span>/ 1</span></div>
<svg class="abs" style="left:1229.50px;top:1026.80px;" width="10" height="12" viewBox="0 0 10 12"><path d="M2.6 1.6 L7.3 6.2 L2.6 10.8" fill="none" stroke="#e4e4e5" stroke-width="1.35" stroke-linecap="round" stroke-linejoin="round"/></svg>
<svg class="abs" style="left:829.50px;top:714.00px;" width="8" height="17" viewBox="0 0 8 17"><path d="M1 1 C2.5 1 4 1.6 4 3 C4 1.6 5.5 1 7 1 M1 16 C2.5 16 4 15.4 4 14 C4 15.4 5.5 16 7 16 M4 3 L4 14 M2.6 9.5 L5.4 9.5" fill="none" stroke="#e8e8e8" stroke-width="1"/></svg>
</body>
</html>
